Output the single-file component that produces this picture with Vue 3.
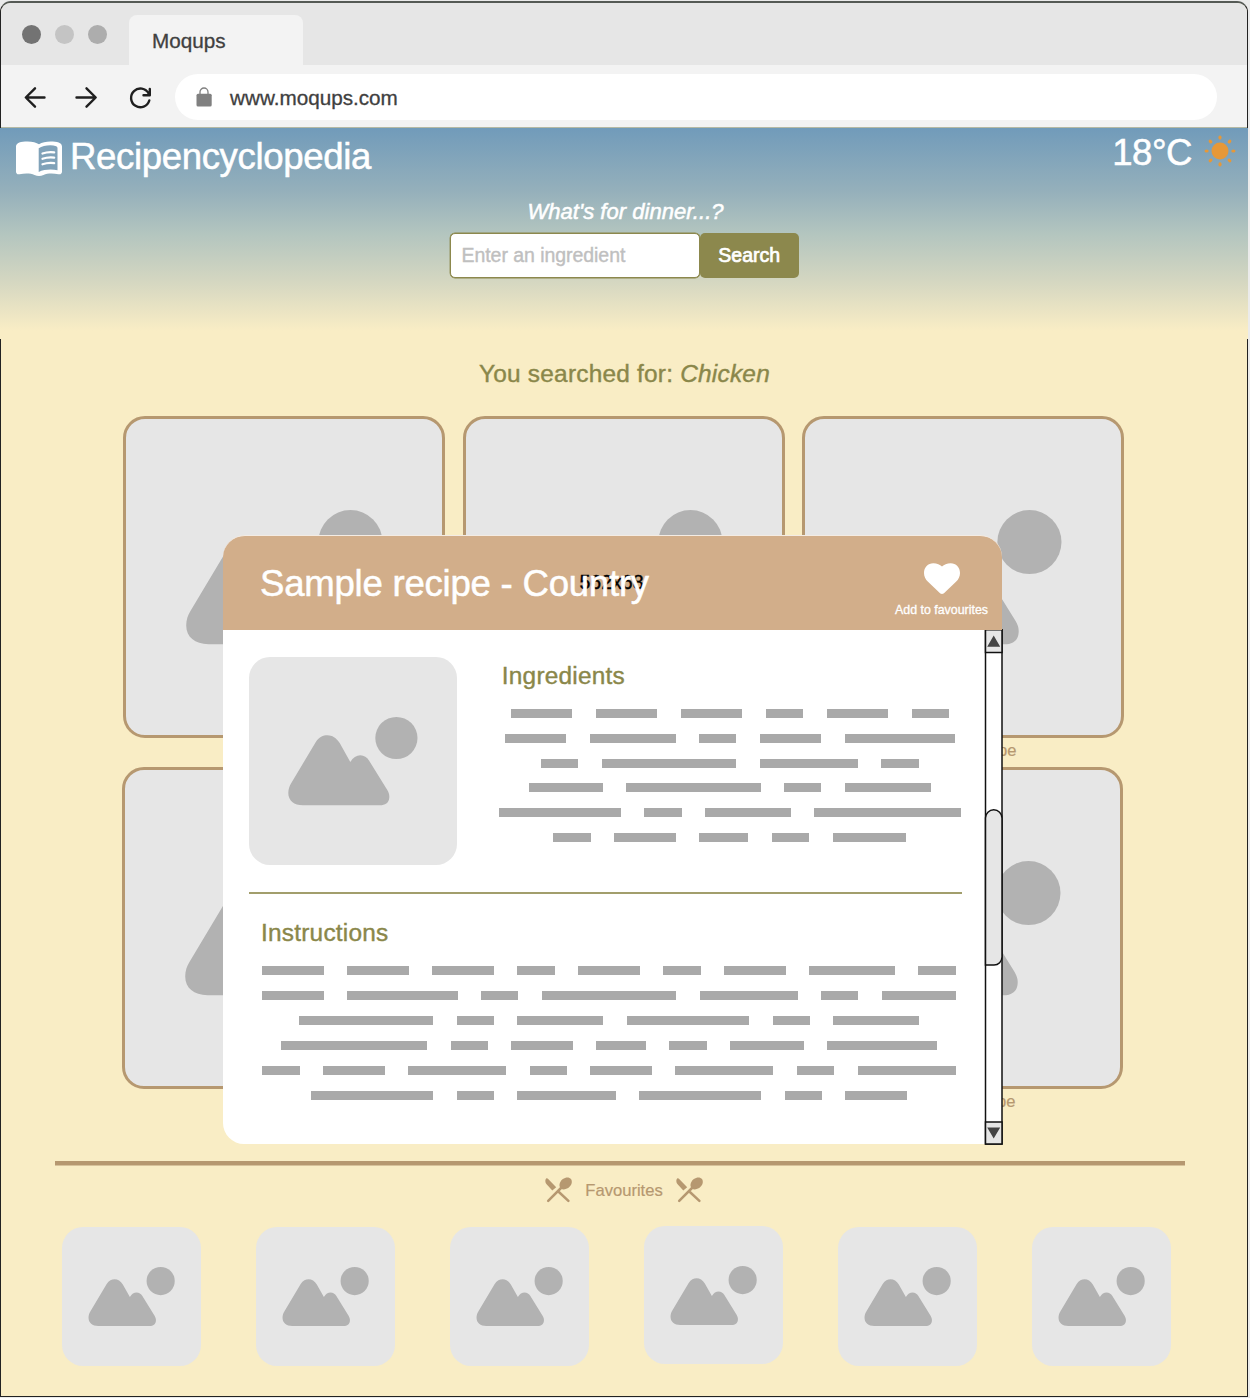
<script setup>
import { h } from 'vue'

const Placeholder = () =>
  h('svg', { viewBox: '0 0 208 208', width: '100%', height: '100%', style: 'display:block' }, [
    h('circle', { cx: 147.4, cy: 81, r: 21.1, fill: '#b2b2b2' }),
    h('path', {
      fill: '#b2b2b2',
      d: 'M39.3 136C39.3 132 40.5 129 42 126.5L66.5 85.5C70 80 74 78.3 78.5 78.3C83 78.3 87.5 81 90.7 86L101.3 105C104 100.5 107.5 98.3 111.3 98.3C115 98.3 118 100.5 120 103.5L138.3 133C140 136 140.5 138 140.3 140.5C140 146 136 148.3 131 148.3L54 148.3C45 148.3 39.3 143.5 39.3 136Z'
    })
  ])

const Utensils = () =>
  h('svg', { viewBox: '0 0 27 26', width: 27, height: 26, style: 'display:block' }, [
    h('path', { fill: '#b69870', d: 'M1.2 1.5C0.2 2.4-.2 5.300 1.600 7.200L7.300 13.600L11.200 10.200L3.200 1.900C2.600 1.200 1.700 1 1.200 1.500Z' }),
    h('path', { fill: '#b69870', d: 'M15.100 10.500C13.600 8 14.800 4.400 17.800 2C20.800-.2 24.400-.1 26 2C27.600 4.300 26.800 7.900 24 10.300C21.300 12.500 18 12.900 16.200 11.800Z' }),
    h('path', { fill: 'none', stroke: '#b69870', 'stroke-width': 2.500, 'stroke-linecap': 'round', d: 'M16.500 10.500L3.200 23.800M12.800 14L23.400 23.800' })
  ])

const rows = [['r1a', 'r1b', 'r1c'], ['r2a', 'r2b', 'r2c']]

const ingredients = [
  [5, 5, 5, 3, 5, 3],
  [5, 7, 3, 5, 9],
  [3, 11, 8, 3],
  [6, 11, 3, 7],
  [10, 3, 7, 12],
  [3, 5, 4, 3, 6]
]
const instructions = [
  [5, 5, 5, 3, 5, 3, 5, 7, 3],
  [5, 9, 3, 11, 8, 3, 6],
  [11, 3, 7, 10, 3, 7],
  [12, 3, 5, 4, 3, 6, 9],
  [3, 5, 8, 3, 5, 8, 3, 8],
  [10, 3, 8, 10, 3, 5]
]
const barWidth = (n) => ({ width: n * 12.15 + 0.9 + 'px' })
</script>

<template>
  <div class="stage">
    <div class="window">
      <div class="titlebar">
        <i class="dot dark"></i><i class="dot light"></i><i class="dot mid"></i>
        <div class="tab">Moqups</div>
      </div>
      <div class="toolbar">
        <svg class="nav" viewBox="0 0 160 30" width="160" height="30" fill="none" stroke="#1f1f1f" stroke-width="2.4" stroke-linecap="round" stroke-linejoin="round">
          <path d="M44.500 15.500H26M35 6.300L25.800 15.500L35 24.700" />
          <path d="M76.500 15.500H95.500M86.500 6.300L95.700 15.500L86.500 24.700" />
          <path d="M148.600 11.500A9.300 9.300 0 1 0 149.300 18.500M149.800 7V13.300H143.500" />
        </svg>
        <div class="url">
          <svg viewBox="0 0 16 20" width="16" height="20">
            <rect x="0.500" y="6.800" width="15.200" height="12.600" rx="1.500" fill="#808080" />
            <path d="M4 7.500V5A4 4 0 0 1 12 5V7.500" fill="none" stroke="#808080" stroke-width="1.300" />
          </svg>
          <span>www.moqups.com</span>
        </div>
      </div>

      <header class="hero">
        <div class="brand">
          <svg viewBox="0 0 46 36" width="46" height="36">
            <path fill="#fff" d="M0 5.500C0 1.800 5 .5 11.500 .5C16.500 .5 20.500 1.700 23 3.200C26 1.600 30 .6 34.500 .6C41 .6 46 1.800 46 5.500V30.500C46 32.800 44.500 33.600 42.500 33.200C37 32.300 31.500 32.200 27.500 34C24.500 35.400 21.500 35.400 18.500 34C14.500 32.200 9 32.300 3.500 33.200C1.500 33.600 0 32.800 0 30.500Z" />
            <path fill="#80a2b9" d="M22.700 7.300C27 4.500 35 3.400 40.200 5.200Q41.500 5.700 41.500 7V29.200C36 28 28 28.200 22.700 31Z" />
            <path fill="none" stroke="#fff" stroke-width="2.200" stroke-linecap="round" d="M26.500 12.500C30 11.200 34.500 10.800 38.200 11.300M26.500 17.800C30 16.500 34.500 16.100 38.200 16.600M26.500 23.300C30 22 34.500 21.600 38.200 22.100" />
          </svg>
          <span>Recipencyclopedia</span>
        </div>
        <div class="weather">
          <span>18°C</span>
          <svg viewBox="-16 -16 32 32" width="32" height="32" fill="#e69838">
            <circle r="8.500" />
            <ellipse v-for="k in 8" :key="k" :transform="`rotate(${k * 45})`" cx="13.400" cy="0" rx="2.100" ry="1.600" />
          </svg>
        </div>
        <div class="tagline">What's for dinner...?</div>
        <div class="search">
          <div class="field">Enter an ingredient</div>
          <div class="button">Search</div>
        </div>
      </header>

      <main>
        <h2 class="result">You searched for: <em>Chicken</em></h2>
        <section v-for="(row, r) in rows" :key="r" class="cards" :class="{ second: r === 1 }">
          <figure v-for="id in row" :key="id" class="card">
            <div class="frame"><Placeholder /></div>
            <figcaption>Sample recipe</figcaption>
          </figure>
        </section>
        <div class="rule"></div>
        <div class="fav-title"><Utensils /><span>Favourites</span><Utensils /></div>
        <div class="favs">
          <div v-for="n in 6" :key="n" class="thumb" :class="{ raised: n === 4 }"><Placeholder /></div>
        </div>
      </main>
    </div>

    <div class="modal">
      <div class="modal-head">
        <span class="size">562x68</span>
        <span class="modal-title">Sample recipe - Country</span>
        <div class="add">
          <svg viewBox="0 0 36 31" width="36" height="31">
            <path fill="#fff" d="M18 31C16.800 31 16 30.200 15 29.300L4 18.800C1.500 16.400 0 13.500 0 10C0 4.300 4 .2 9.300 .2C13 .2 16 1.600 18 3.600C20 1.600 23 .2 26.700 .2C32 .2 36 4.300 36 10C36 13.500 34.500 16.400 32 18.800L21 29.300C20 30.200 19.200 31 18 31Z" />
          </svg>
          <span>Add to favourites</span>
        </div>
      </div>
      <div class="modal-body">
        <div class="content">
          <div class="top">
            <div class="photo"><Placeholder /></div>
            <div class="ingr">
              <h3>Ingredients</h3>
              <div class="lines tight">
                <div v-for="(line, i) in ingredients" :key="i" class="line">
                  <i v-for="(n, j) in line" :key="j" :style="barWidth(n)"></i>
                </div>
              </div>
            </div>
          </div>
          <div class="sep"></div>
          <h3 class="instr">Instructions</h3>
          <div class="lines">
            <div v-for="(line, i) in instructions" :key="i" class="line">
              <i v-for="(n, j) in line" :key="j" :style="barWidth(n)"></i>
            </div>
          </div>
        </div>
        <svg class="scroll" viewBox="0 0 19 516" width="19" height="516" stroke="#111" stroke-width="1.500">
          <rect x="1.500" y="0.800" width="16.500" height="514.200" fill="#fff" />
          <rect x="1.500" y="0.800" width="16.500" height="22.700" fill="#e6e6e6" />
          <rect x="1.500" y="493" width="16.500" height="22" fill="#e6e6e6" />
          <path d="M1.500 336V189A8.250 8.250 0 0 1 18 189V328A8 8 0 0 1 10 336Z" fill="#e6e6e6" />
          <path d="M3.200 17.700L9.700 6.500L16.200 17.700ZM3.200 498.500H16.200L9.700 509.500Z" fill="#444" stroke="none" />
        </svg>
      </div>
    </div>
  </div>
</template>

<style>
body { margin: 0; background: #e8e8e8; }
</style>

<style scoped>
* { box-sizing: border-box; }
.stage {
  position: relative;
  width: 1250px;
  height: 1398px;
  overflow: hidden;
  background: #ebebeb;
  font-family: "Liberation Sans", Arial, sans-serif;
}
.window {
  width: 1248px;
  height: 1396px;
  margin-top: 1px;
  border: 1px solid #222;
  border-top: 2px solid #555a55;
  border-radius: 11px 11px 0 0;
  background: #f9edc5;
  display: flex;
  flex-direction: column;
}
.titlebar {
  height: 62px;
  background: #e6e6e6;
  border-radius: 9px 9px 0 0;
  display: flex;
  padding-left: 21px;
  flex: none;
}
.dot { width: 19px; height: 19px; border-radius: 50%; margin: 22px 14px 0 0; flex: none; }
.dark { background: #737373; }
.light { background: #c4c4c4; }
.mid { background: #adadad; margin-right: 8px; }
.titlebar .tab {
  width: 174px;
  height: 50px;
  margin: 12px 0 0 14px;
  padding-left: 23px;
  background: #f3f3f3;
  border-radius: 8px 8px 0 0;
  font-size: 20.7px;
  line-height: 52px;
  color: #404040;
  -webkit-text-stroke: 0.3px #404040;
}
.toolbar {
  height: 63px;
  flex: none;
  background: #f3f3f3;
  border-bottom: 1px solid #b4b9a4;
  display: flex;
  align-items: flex-start;
}
.nav { margin: 17px 14px 0 -1px; flex: none; }
.url {
  width: 1042px;
  height: 46px;
  margin: 9px 0 0 1px;
  border-radius: 23px;
  background: #fff;
  display: flex;
  align-items: center;
  padding-left: 21px;
  gap: 18px;
  font-size: 20.7px;
  color: #404040;
  -webkit-text-stroke: 0.3px #404040;
}
.url svg { margin-top: -1px; }
.url span { line-height: 46px; padding-top: 2px; }
.hero {
  height: 211px;
  flex: none;
  margin: 0 -1px;
  background: linear-gradient(#719bba 0%, #95b0bb 30%, #b3c5bf 50%, #d5d7c1 73%, #f9edc5 96%);
  color: #fff;
  display: grid;
  grid-template-columns: 1fr 1fr;
  grid-template-rows: 62px 43px 1fr;
}
.brand { display: flex; align-items: center; padding-left: 16px; gap: 8px; font-size: 36.6px; letter-spacing: -0.36px; height: 62px; -webkit-text-stroke: 0.5px #fff; }
.brand span { line-height: 58px; padding-bottom: 4px; }
.weather { display: flex; justify-content: flex-end; padding-right: 12px; gap: 12px; font-size: 36.6px; letter-spacing: -0.5px; height: 50px; align-items: center; -webkit-text-stroke: 0.5px #fff; }
.weather svg { margin-top: -4px; }
.tagline { grid-column: 1 / 3; text-align: center; font-style: italic; font-size: 22px; line-height: 44px; padding-left: 3px; letter-spacing: .04px; -webkit-text-stroke: 0.5px #fff; }
.search { grid-column: 1 / 3; display: flex; padding-left: 450px; font-size: 19.5px; line-height: 43px; }
.field { width: 250px; height: 45px; border: 1px solid #8c884d; box-shadow: 0 0 0 .4px #8c884d; border-radius: 5px; background: #fff; color: #bfbfbf; padding-left: 10.500px; letter-spacing: -.05px; -webkit-text-stroke: 0.4px #bfbfbf; }
.button { width: 98.500px; height: 44.500px; border-radius: 5px; background: #8c884d; text-align: center; line-height: 45px; -webkit-text-stroke: 0.7px #fff; }
h2, h3 { margin: 0; font-weight: 400; color: #8a874a; font-size: 24.4px; letter-spacing: .23px; -webkit-text-stroke: 0.4px #8a874a; }
.result { padding-top: 19px; line-height: 32px; height: 77px; text-align: center; padding-left: 1px; }
.cards { display: flex; gap: 17.700px; padding-left: 122px; height: 351px; }
.cards.second { padding-left: 121px; }
.card { margin: 0; width: 322px; flex: none; }
.frame { width: 322px; height: 322px; border: 3px solid #b69870; border-radius: 22px; background: #e6e6e6; }
.frame svg { transform: translateX(.5px); }
figcaption { text-align: center; font-size: 16.6px; line-height: 26px; color: #b69870; -webkit-text-stroke: 0.2px #b69870; }
.rule { width: 1130px; height: 4px; margin: 43px 0 0 54px; background: #b69870; box-shadow: 0 .5px 0 #b69870; }
.fav-title { display: flex; align-items: center; justify-content: center; gap: 13px; height: 26px; margin-top: 12px; font-size: 16.6px; color: #b69870; -webkit-text-stroke: 0.2px #b69870; }
.fav-title span { padding-top: 1px; }
.favs { display: flex; gap: 55.200px; padding: 24px 0 0 61.400px; }
.thumb { width: 138.800px; height: 138.800px; border-radius: 21px; background: #e6e6e6; flex: none; }
.thumb svg { transform: translateX(.3px); }
.thumb.raised { margin-top: -1.500px; }
.modal { position: absolute; left: 223px; top: 535px; width: 780px; height: 610px; }
.modal-head {
  position: relative;
  width: 779px;
  height: 95px;
  border-top: 1px solid #f4ece4;
  border-radius: 22px 22px 0 0;
  background: #d2ae8a;
  display: flex;
  justify-content: space-between;
  color: #fff;
}
.modal-title { position: relative; padding-left: 37px; font-size: 36.6px; letter-spacing: -.24px; line-height: 95px; -webkit-text-stroke: 0.5px #fff; }
.size { position: absolute; left: 356.500px; top: 0; font-size: 19.5px; line-height: 93px; color: #000; -webkit-text-stroke: 0.4px #000; }
.add { width: 121px; padding-top: 27px; display: flex; flex-direction: column; align-items: center; font-size: 12.4px; -webkit-text-stroke: 0.3px #fff; }
.add span { line-height: 16px; margin-top: 8px; white-space: nowrap; }
.modal-body { display: flex; height: 514px; }
.content { width: 763px; height: 514px; background: #fff; border-radius: 0 0 0 21px; padding: 27px 0 0 26px; flex: none; }
.scroll { flex: none; margin: -1px 0 0 -2px; }
.top { display: flex; height: 235px; }
.photo { width: 208px; height: 208px; margin-left: .300px; border-radius: 21px; background: #e6e6e6; flex: none; }
.ingr { width: 465px; margin-left: 39.500px; }
.ingr h3 { line-height: 36px; padding: 1px 0 15px 5px; }
.lines { display: flex; flex-direction: column; gap: 16px; width: 697px; margin-left: 11.500px; }
.lines.tight { gap: 15.800px; width: 465px; margin: 0; }
.ingr .lines { margin-left: .5px; }
.line { display: flex; justify-content: center; gap: 23.400px; height: 9px; }
.line i { height: 9px; background: #a9a9a9; flex: none; }
.sep { width: 713px; height: 2px; margin-left: .3px; background: #a29e6c; }
.instr { line-height: 36px; padding: 21px 0 15px 12px; }
</style>
